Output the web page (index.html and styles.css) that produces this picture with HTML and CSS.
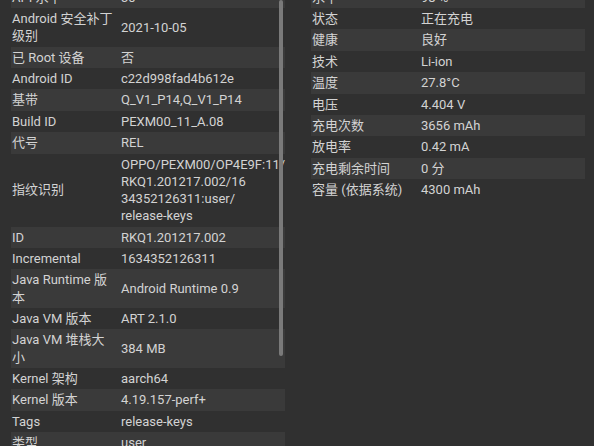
FILE: index.html
```html
<!DOCTYPE html>
<html lang="zh-CN">
<head>
<meta charset="utf-8">
<title>设备信息</title>
<link rel="stylesheet" href="styles.css">
</head>
<body>
<div class="page">
  <section class="panel panel-left">
    <div class="row alt"><div class="k">API 水平</div><div class="v">30</div></div>
    <div class="row"><div class="k">Android 安全补丁级别</div><div class="v">2021-10-05</div></div>
    <div class="row alt"><div class="k">已 Root 设备</div><div class="v">否</div></div>
    <div class="row"><div class="k">Android ID</div><div class="v">c22d998fad4b612e</div></div>
    <div class="row alt"><div class="k">基带</div><div class="v">Q_V1_P14,Q_V1_P14</div></div>
    <div class="row"><div class="k">Build ID</div><div class="v">PEXM00_11_A.08</div></div>
    <div class="row alt"><div class="k">代号</div><div class="v">REL</div></div>
    <div class="row"><div class="k">指纹识别</div><div class="v">OPPO/PEXM00/OP4E9F:11/<br>RKQ1.201217.002/16<br>34352126311:user/<br>release-keys</div></div>
    <div class="row alt"><div class="k">ID</div><div class="v">RKQ1.201217.002</div></div>
    <div class="row"><div class="k">Incremental</div><div class="v">1634352126311</div></div>
    <div class="row alt"><div class="k">Java Runtime 版本</div><div class="v">Android Runtime 0.9</div></div>
    <div class="row"><div class="k">Java VM 版本</div><div class="v">ART 2.1.0</div></div>
    <div class="row alt"><div class="k">Java VM 堆栈大小</div><div class="v">384 MB</div></div>
    <div class="row"><div class="k">Kernel 架构</div><div class="v">aarch64</div></div>
    <div class="row alt"><div class="k">Kernel 版本</div><div class="v">4.19.157-perf+</div></div>
    <div class="row"><div class="k">Tags</div><div class="v">release-keys</div></div>
    <div class="row alt"><div class="k">类型</div><div class="v">user</div></div>
    <div class="scrollbar"></div>
  </section>
  <section class="panel panel-right">
    <div class="row alt"><div class="k">水平</div><div class="v">98 %</div></div>
    <div class="row"><div class="k">状态</div><div class="v">正在充电</div></div>
    <div class="row alt"><div class="k">健康</div><div class="v">良好</div></div>
    <div class="row"><div class="k">技术</div><div class="v">Li-ion</div></div>
    <div class="row alt"><div class="k">温度</div><div class="v">27.8°C</div></div>
    <div class="row"><div class="k">电压</div><div class="v">4.404 V</div></div>
    <div class="row alt"><div class="k">充电次数</div><div class="v">3656 mAh</div></div>
    <div class="row"><div class="k">放电率</div><div class="v">0.42 mA</div></div>
    <div class="row alt"><div class="k">充电剩余时间</div><div class="v">0 分</div></div>
    <div class="row"><div class="k">容量 (依据系统)</div><div class="v">4300 mAh</div></div>
  </section>
</div>
</body>
</html>
```

FILE: styles.css
```css
html, body {
  margin: 0;
  padding: 0;
  background: #303030;
  height: 100%;
  overflow: hidden;
}

body {
  font-family: Roboto, "Noto Sans CJK SC", sans-serif;
  font-size: 13px;
  color: #d3d3d3;
}

.page {
  display: flex;
  align-items: flex-start;
  gap: 26px;
  padding-left: 11px;
  margin-top: -13.4px;
}

.panel {
  width: 274px;
  display: flex;
  flex-direction: column;
}

.panel-left {
  position: relative;
}

.row {
  display: grid;
  grid-template-columns: 110px 1fr;
  align-items: center;
  line-height: 17.2px;
  padding: 2.1px 0;
}

.row.alt {
  background: #3a3a3a;
}

.k {
  padding-left: 1px;
  padding-right: 5px;
}

.v {
  padding-right: 4px;
}

.scrollbar {
  position: absolute;
  left: 268px;
  top: 13.4px;
  width: 4px;
  height: 356px;
  border-radius: 2px;
  background: #7a7a7a;
}
```
